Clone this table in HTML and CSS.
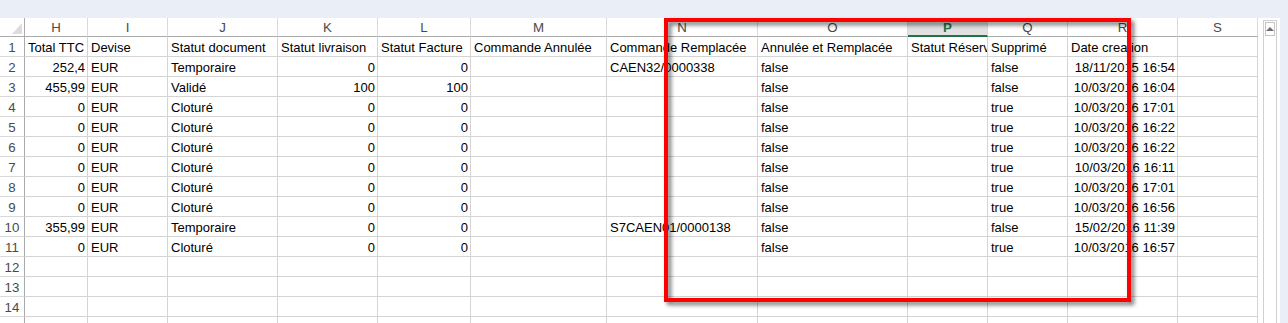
FILE: index.html
```html
<!DOCTYPE html>
<html lang="fr">
<head>
<meta charset="utf-8">
<title>Feuille</title>
<link rel="stylesheet" href="styles.css">
</head>
<body>
<div class="top"></div>
<div class="main">
  <div class="sheet">
    <div class="grid">
      <div class="corner"><span class="tri"></span></div>
      <div class="ch">H</div><div class="ch">I</div><div class="ch">J</div><div class="ch">K</div><div class="ch">L</div><div class="ch">M</div><div class="ch">N</div><div class="ch">O</div><div class="ch sel">P</div><div class="ch">Q</div><div class="ch">R</div><div class="ch">S</div>

      <div class="rh">1</div>
      <div class="c">Total TTC</div><div class="c">Devise</div><div class="c">Statut document</div><div class="c">Statut livraison</div><div class="c">Statut Facture</div><div class="c">Commande Annulée</div><div class="c">Commande Remplacée</div><div class="c">Annulée et Remplacée</div><div class="c">Statut Réservation</div><div class="c">Supprimé</div><div class="c">Date creation</div><div class="c"></div>

      <div class="rh">2</div>
      <div class="c n">252,4</div><div class="c">EUR</div><div class="c">Temporaire</div><div class="c n">0</div><div class="c n">0</div><div class="c"></div><div class="c">CAEN32/0000338</div><div class="c">false</div><div class="c"></div><div class="c">false</div><div class="c n">18/11/2015 16:54</div><div class="c"></div>

      <div class="rh">3</div>
      <div class="c n">455,99</div><div class="c">EUR</div><div class="c">Validé</div><div class="c n">100</div><div class="c n">100</div><div class="c"></div><div class="c"></div><div class="c">false</div><div class="c"></div><div class="c">false</div><div class="c n">10/03/2016 16:04</div><div class="c"></div>

      <div class="rh">4</div>
      <div class="c n">0</div><div class="c">EUR</div><div class="c">Cloturé</div><div class="c n">0</div><div class="c n">0</div><div class="c"></div><div class="c"></div><div class="c">false</div><div class="c"></div><div class="c">true</div><div class="c n">10/03/2016 17:01</div><div class="c"></div>

      <div class="rh">5</div>
      <div class="c n">0</div><div class="c">EUR</div><div class="c">Cloturé</div><div class="c n">0</div><div class="c n">0</div><div class="c"></div><div class="c"></div><div class="c">false</div><div class="c"></div><div class="c">true</div><div class="c n">10/03/2016 16:22</div><div class="c"></div>

      <div class="rh">6</div>
      <div class="c n">0</div><div class="c">EUR</div><div class="c">Cloturé</div><div class="c n">0</div><div class="c n">0</div><div class="c"></div><div class="c"></div><div class="c">false</div><div class="c"></div><div class="c">true</div><div class="c n">10/03/2016 16:22</div><div class="c"></div>

      <div class="rh">7</div>
      <div class="c n">0</div><div class="c">EUR</div><div class="c">Cloturé</div><div class="c n">0</div><div class="c n">0</div><div class="c"></div><div class="c"></div><div class="c">false</div><div class="c"></div><div class="c">true</div><div class="c n">10/03/2016 16:11</div><div class="c"></div>

      <div class="rh">8</div>
      <div class="c n">0</div><div class="c">EUR</div><div class="c">Cloturé</div><div class="c n">0</div><div class="c n">0</div><div class="c"></div><div class="c"></div><div class="c">false</div><div class="c"></div><div class="c">true</div><div class="c n">10/03/2016 17:01</div><div class="c"></div>

      <div class="rh">9</div>
      <div class="c n">0</div><div class="c">EUR</div><div class="c">Cloturé</div><div class="c n">0</div><div class="c n">0</div><div class="c"></div><div class="c"></div><div class="c">false</div><div class="c"></div><div class="c">true</div><div class="c n">10/03/2016 16:56</div><div class="c"></div>

      <div class="rh">10</div>
      <div class="c n">355,99</div><div class="c">EUR</div><div class="c">Temporaire</div><div class="c n">0</div><div class="c n">0</div><div class="c"></div><div class="c">S7CAEN01/0000138</div><div class="c">false</div><div class="c"></div><div class="c">false</div><div class="c n">15/02/2016 11:39</div><div class="c"></div>

      <div class="rh">11</div>
      <div class="c n">0</div><div class="c">EUR</div><div class="c">Cloturé</div><div class="c n">0</div><div class="c n">0</div><div class="c"></div><div class="c"></div><div class="c">false</div><div class="c"></div><div class="c">true</div><div class="c n">10/03/2016 16:57</div><div class="c"></div>

      <div class="rh">12</div>
      <div class="c"></div><div class="c"></div><div class="c"></div><div class="c"></div><div class="c"></div><div class="c"></div><div class="c"></div><div class="c"></div><div class="c"></div><div class="c"></div><div class="c"></div><div class="c"></div>

      <div class="rh">13</div>
      <div class="c"></div><div class="c"></div><div class="c"></div><div class="c"></div><div class="c"></div><div class="c"></div><div class="c"></div><div class="c"></div><div class="c"></div><div class="c"></div><div class="c"></div><div class="c"></div>

      <div class="rh">14</div>
      <div class="c"></div><div class="c"></div><div class="c"></div><div class="c"></div><div class="c"></div><div class="c"></div><div class="c"></div><div class="c"></div><div class="c"></div><div class="c"></div><div class="c"></div><div class="c"></div>

      <div class="rh"></div>
      <div class="c"></div><div class="c"></div><div class="c"></div><div class="c"></div><div class="c"></div><div class="c"></div><div class="c"></div><div class="c"></div><div class="c"></div><div class="c"></div><div class="c"></div><div class="c"></div>
    </div>
  </div>
  <div class="vscroll">
    <div class="track">
      <div class="btn"><span class="arrow"></span></div>
    </div>
  </div>
</div>
<div class="highlight"></div>
</body>
</html>
```

FILE: styles.css
```css
html, body {
  margin: 0;
  padding: 0;
}
body {
  background: #eaeef6;
  font-family: "Liberation Sans", Arial, sans-serif;
  font-size: 13px;
  color: #000;
  overflow: hidden;
  height: 323px;
  position: relative;
}
.top {
  height: 18px;
}
.main {
  display: flex;
  width: 1280px;
  background: #fff;
  height: 305px;
}
.sheet {
  width: 1258px;
  overflow: hidden;
}
.grid {
  display: grid;
  grid-template-columns: 25px 63px 80px 110px 100px 93px 136px 151px 150px 80px 80px 110px 80px;
  grid-template-rows: 19px;
  grid-auto-rows: 20px;
}
.grid > div {
  box-sizing: border-box;
  white-space: nowrap;
  overflow: hidden;
}
.corner {
  border-right: 1px solid #ababab;
  border-bottom: 1px solid #ababab;
  position: relative;
}
.tri {
  position: absolute;
  right: 2px;
  bottom: 2px;
  width: 0;
  height: 0;
  border-left: 10px solid transparent;
  border-bottom: 11px solid #dcdcdc;
}
.ch {
  border-right: 1px solid #dadada;
  border-bottom: 1px solid #ababab;
  text-align: center;
  color: #4a4a4a;
  line-height: 19px;
  font-size: 13.3px;
}
.ch.sel {
  background: #e1e1e1;
  color: #217346;
  font-weight: bold;
  border-bottom: 2px solid #217346;
  line-height: 19px;
}
.rh {
  border-right: 1px solid #ababab;
  border-bottom: 1px solid #dadada;
  text-align: center;
  color: #4a4a4a;
  line-height: 21px;
  font-size: 13.3px;
}
.c {
  border-right: 1px solid #d4d4d4;
  border-bottom: 1px solid #d4d4d4;
  padding: 0 2px 0 3px;
  line-height: 21px;
}
.c.n {
  text-align: right;
}
.vscroll {
  width: 22px;
  box-sizing: border-box;
  padding: 2px 3px 0 4px;
  border-left: 1px solid #ffffff;
}
.track {
  height: 100%;
  box-sizing: border-box;
  border: 1px solid #d0d0d0;
  border-bottom: none;
  padding: 1px;
}
.btn {
  height: 12px;
  border: 1px solid #c4c4c4;
  display: flex;
  align-items: center;
  justify-content: center;
}
.arrow {
  width: 0;
  height: 0;
  border-left: 4px solid transparent;
  border-right: 4px solid transparent;
  border-bottom: 4px solid #6d6d6d;
}
.highlight {
  position: absolute;
  left: 664px;
  top: 18px;
  width: 467px;
  height: 284px;
  box-sizing: border-box;
  border: 4px solid #ff0000;
  filter: drop-shadow(3px 3px 2px rgba(0, 0, 0, 0.55));
}
```
